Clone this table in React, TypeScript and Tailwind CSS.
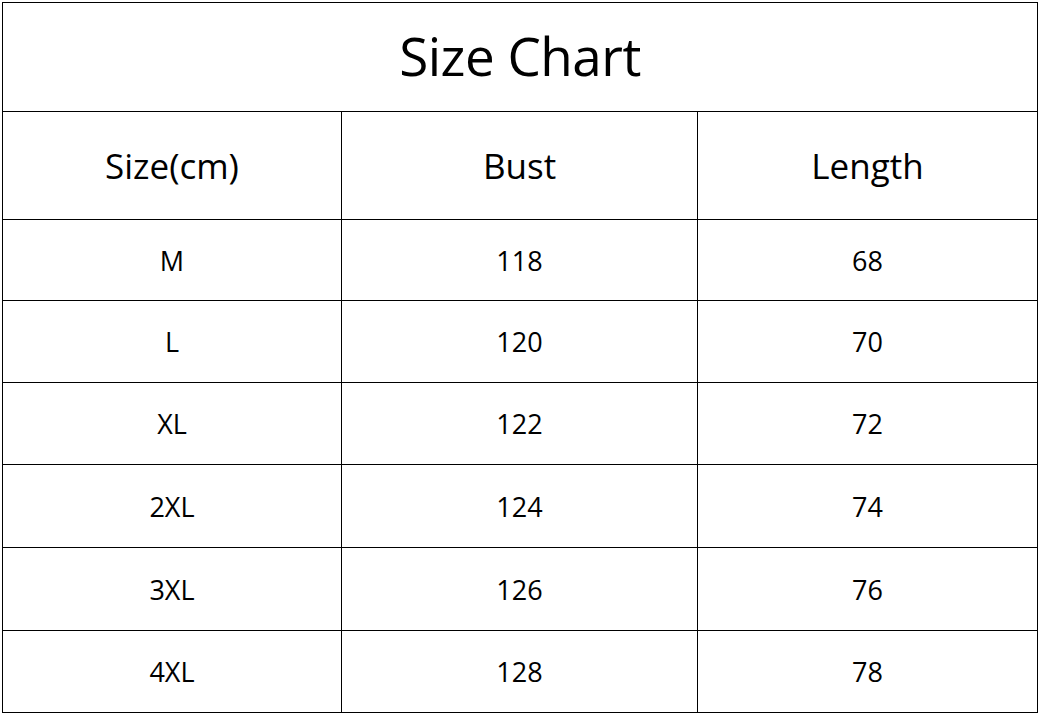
import React from "react";

const rows = [
  ["M", "118", "68"],
  ["L", "120", "70"],
  ["XL", "122", "72"],
  ["2XL", "124", "74"],
  ["3XL", "126", "76"],
  ["4XL", "128", "78"],
];

export default function App() {
  return (
    <div className="w-[1041px] h-[715px] bg-white pl-[2px] pt-[2px]" style={{ fontFamily: "'Open Sans', 'Liberation Sans', sans-serif" }}>
      <div className="w-[1036px] bg-black p-px grid gap-px grid-cols-[338px_355px_339px] grid-rows-[108px_107px_80px_81px_81px_82px_82px_81px] text-black">
        <div className="col-span-3 bg-white flex items-center justify-center text-[53px] tracking-[-0.5px] leading-none pb-[3px]">Size Chart</div>
        <div className="bg-white flex items-center justify-center text-[35px] leading-none">Size(cm)</div>
        <div className="bg-white flex items-center justify-center text-[35px] leading-none">Bust</div>
        <div className="bg-white flex items-center justify-center text-[35px] leading-none">Length</div>
        {rows.map((r) =>
          r.map((c, i) => (
            <div key={r[0] + i} className="bg-white flex items-center justify-center text-[27px] leading-none">
              {c}
            </div>
          ))
        )}
      </div>
    </div>
  );
}
